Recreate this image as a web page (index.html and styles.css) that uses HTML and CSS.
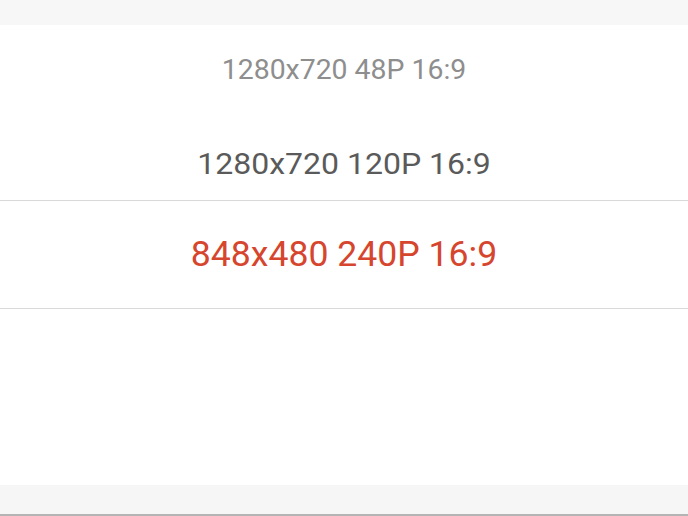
FILE: index.html
```html
<!DOCTYPE html>
<html lang="en">

<head>
    <meta charset="UTF-8">
    <title>Resolution Picker</title>
    <link rel="stylesheet" href="styles.css">
</head>

<body>

    <div class="sheet">
        <div class="top-bar"></div>

        <!-- wheel picker -->
        <div class="picker">
            <div class="item item-far"><span>1280x720 48P 16:9</span></div>
            <div class="item item-near"><span>1280x720 120P 16:9</span></div>
            <div class="item item-selected"><span>848x480 240P 16:9</span></div>
            <div class="item item-empty"></div>
        </div>

        <div class="bottom-bar"></div>
    </div>

</body>

</html>
```

FILE: styles.css
```css
* {
    box-sizing: border-box;
}

body {
    margin: 0;
    font-family: Roboto, 'Noto Sans', sans-serif;
    background: #fff;
}

.sheet {
    display: flex;
    flex-direction: column;
    width: 688px;
    height: 516px;
    overflow: hidden;
}

.top-bar {
    height: 25px;
    background: #f7f7f7;
}

.picker {
    height: 460px;
    display: flex;
    flex-direction: column;
    background: #fff;
}

.item {
    display: flex;
    justify-content: center;
    align-items: center;
    white-space: nowrap;
}

.item span {
    display: inline-block;
    line-height: 1;
}

.item-far {
    height: 90px;
    font-size: 28.4px;
    color: #8e8e8e;
}

.item-near {
    height: 85px;
    padding-top: 13px;
    font-size: 32px;
    color: #5a5a5a;
}

.item-near span {
    transform: scaleY(0.9);
}

.item-selected {
    height: 109px;
    font-size: 35.6px;
    color: #d6452d;
    border-top: 1px solid #d9d9d9;
    border-bottom: 1px solid #d9d9d9;
}

.item-empty {
    flex: 1;
}

.bottom-bar {
    height: 31px;
    background: #f6f6f6;
    border-bottom: 2px solid #b4b4b4;
}
```
